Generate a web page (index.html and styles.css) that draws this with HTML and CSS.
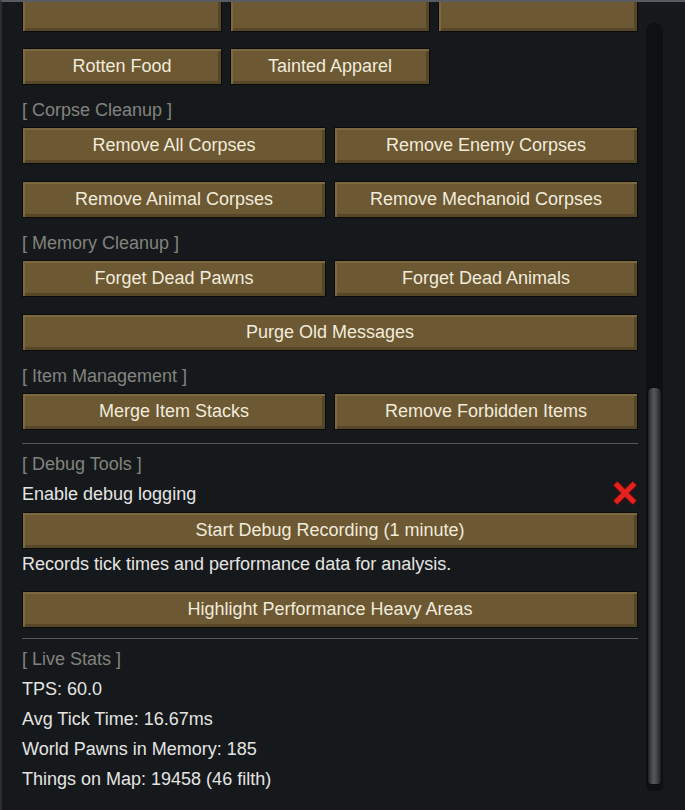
FILE: index.html
```html
<!DOCTYPE html>
<html>
<head>
<meta charset="utf-8">
<link rel="stylesheet" href="styles.css">
</head>
<body>
<div class="window">
  <div class="content">
    <div class="row row-top">
      <div class="btn small"></div>
      <div class="btn small"></div>
      <div class="btn small"></div>
    </div>
    <div class="row row-gap16">
      <div class="btn small">Rotten Food</div>
      <div class="btn small">Tainted Apparel</div>
    </div>

    <div class="header">[ Corpse Cleanup ]</div>
    <div class="row">
      <div class="btn half">Remove All Corpses</div>
      <div class="btn half">Remove Enemy Corpses</div>
    </div>
    <div class="row row-gap17">
      <div class="btn half">Remove Animal Corpses</div>
      <div class="btn half">Remove Mechanoid Corpses</div>
    </div>

    <div class="header">[ Memory Cleanup ]</div>
    <div class="row">
      <div class="btn half">Forget Dead Pawns</div>
      <div class="btn half">Forget Dead Animals</div>
    </div>
    <div class="row row-gap17">
      <div class="btn full">Purge Old Messages</div>
    </div>

    <div class="header">[ Item Management ]</div>
    <div class="row">
      <div class="btn half">Merge Item Stacks</div>
      <div class="btn half">Remove Forbidden Items</div>
    </div>

    <div class="sep sep-a"></div>
    <div class="line header2">[ Debug Tools ]</div>
    <div class="line toggle">
      <span>Enable debug logging</span>
      <svg class="xicon" width="28" height="28" viewBox="0 0 28 28">
        <path d="M4 4 L24 24 M24 4 L4 24" stroke="#5a0c0c" stroke-width="7" stroke-linecap="butt"/>
        <path d="M4.5 4.5 L23.5 23.5 M23.5 4.5 L4.5 23.5" stroke="#e4211f" stroke-width="5" stroke-linecap="butt"/>
      </svg>
    </div>
    <div class="btn full btn-debug">Start Debug Recording (1 minute)</div>
    <div class="line">Records tick times and performance data for analysis.</div>
    <div class="btn full btn-highlight">Highlight Performance Heavy Areas</div>

    <div class="sep sep-b"></div>
    <div class="line header2">[ Live Stats ]</div>
    <div class="line">TPS: 60.0</div>
    <div class="line">Avg Tick Time: 16.67ms</div>
    <div class="line">World Pawns in Memory: 185</div>
    <div class="line">Things on Map: 19458 (46 filth)</div>
  </div>
  <div class="scrollbar">
    <div class="track">
      <div class="thumb"></div>
    </div>
  </div>
</div>
</body>
</html>
```

FILE: styles.css
```css
* { box-sizing: border-box; }

html, body {
  margin: 0;
  padding: 0;
  background: #16191c;
}

body {
  width: 685px;
  height: 810px;
  overflow: hidden;
  font-family: "Liberation Sans", Arial, sans-serif;
  font-size: 18px;
  color: #e4e4e2;
}

.window {
  display: flex;
  height: 810px;
  border-top: 2px solid #585c61;
  border-left: 2px solid #2a2d31;
  background: #16191c;
  overflow: hidden;
}

.content {
  width: 636px;
  padding-left: 20px;
  display: flex;
  flex-direction: column;
  margin-top: -7px;
}

.row {
  display: flex;
  gap: 8px;
}

.row-gap16 { margin-top: 16px; }
.row-gap17 { margin-top: 17px; }

.btn {
  height: 37px;
  display: flex;
  align-items: center;
  justify-content: center;
  background: #6c5832;
  border: 1px solid #0b0b0a;
  box-shadow:
    inset 2px 2px 0 #7c6940,
    inset -3px -3px 0 #574628;
  color: #f1ebdb;
  white-space: nowrap;
}

.small { width: 200px; }
.half { width: 304px; }
.full { width: 616px; }

.header {
  margin-top: 13px;
  margin-bottom: 5px;
  height: 24px;
  line-height: 24px;
  color: #82837d;
}

.sep {
  height: 1px;
  width: 616px;
  background: #55585c;
}
.sep-a { margin-top: 13px; }
.sep-b { margin-top: 10px; }

.line {
  height: 30px;
  line-height: 30px;
  white-space: nowrap;
}

.header2 {
  margin-top: 5px;
  color: #82837d;
}

.toggle {
  display: flex;
  justify-content: space-between;
  align-items: center;
}

.xicon {
  margin-right: -1px;
  margin-top: -2px;
}

.btn-debug { margin-top: 3px; }
.btn-highlight { margin-top: 12px; }

.scrollbar {
  margin-left: 8px;
  padding-top: 21px;
  width: 17px;
}

.track {
  width: 17px;
  height: 768px;
  background: #0e1012;
  border-radius: 8px 8px 5px 5px;
  padding-top: 364px;
  padding-left: 1px;
}

.thumb {
  width: 15px;
  height: 398px;
  border-radius: 6px 6px 4px 4px;
  background: linear-gradient(to right, #1d1f22 0%, #3d3f43 20%, #56585c 45%, #3b3d41 75%, #1c1e21 100%);
  border: 1px solid #0a0b0c;
}
```
